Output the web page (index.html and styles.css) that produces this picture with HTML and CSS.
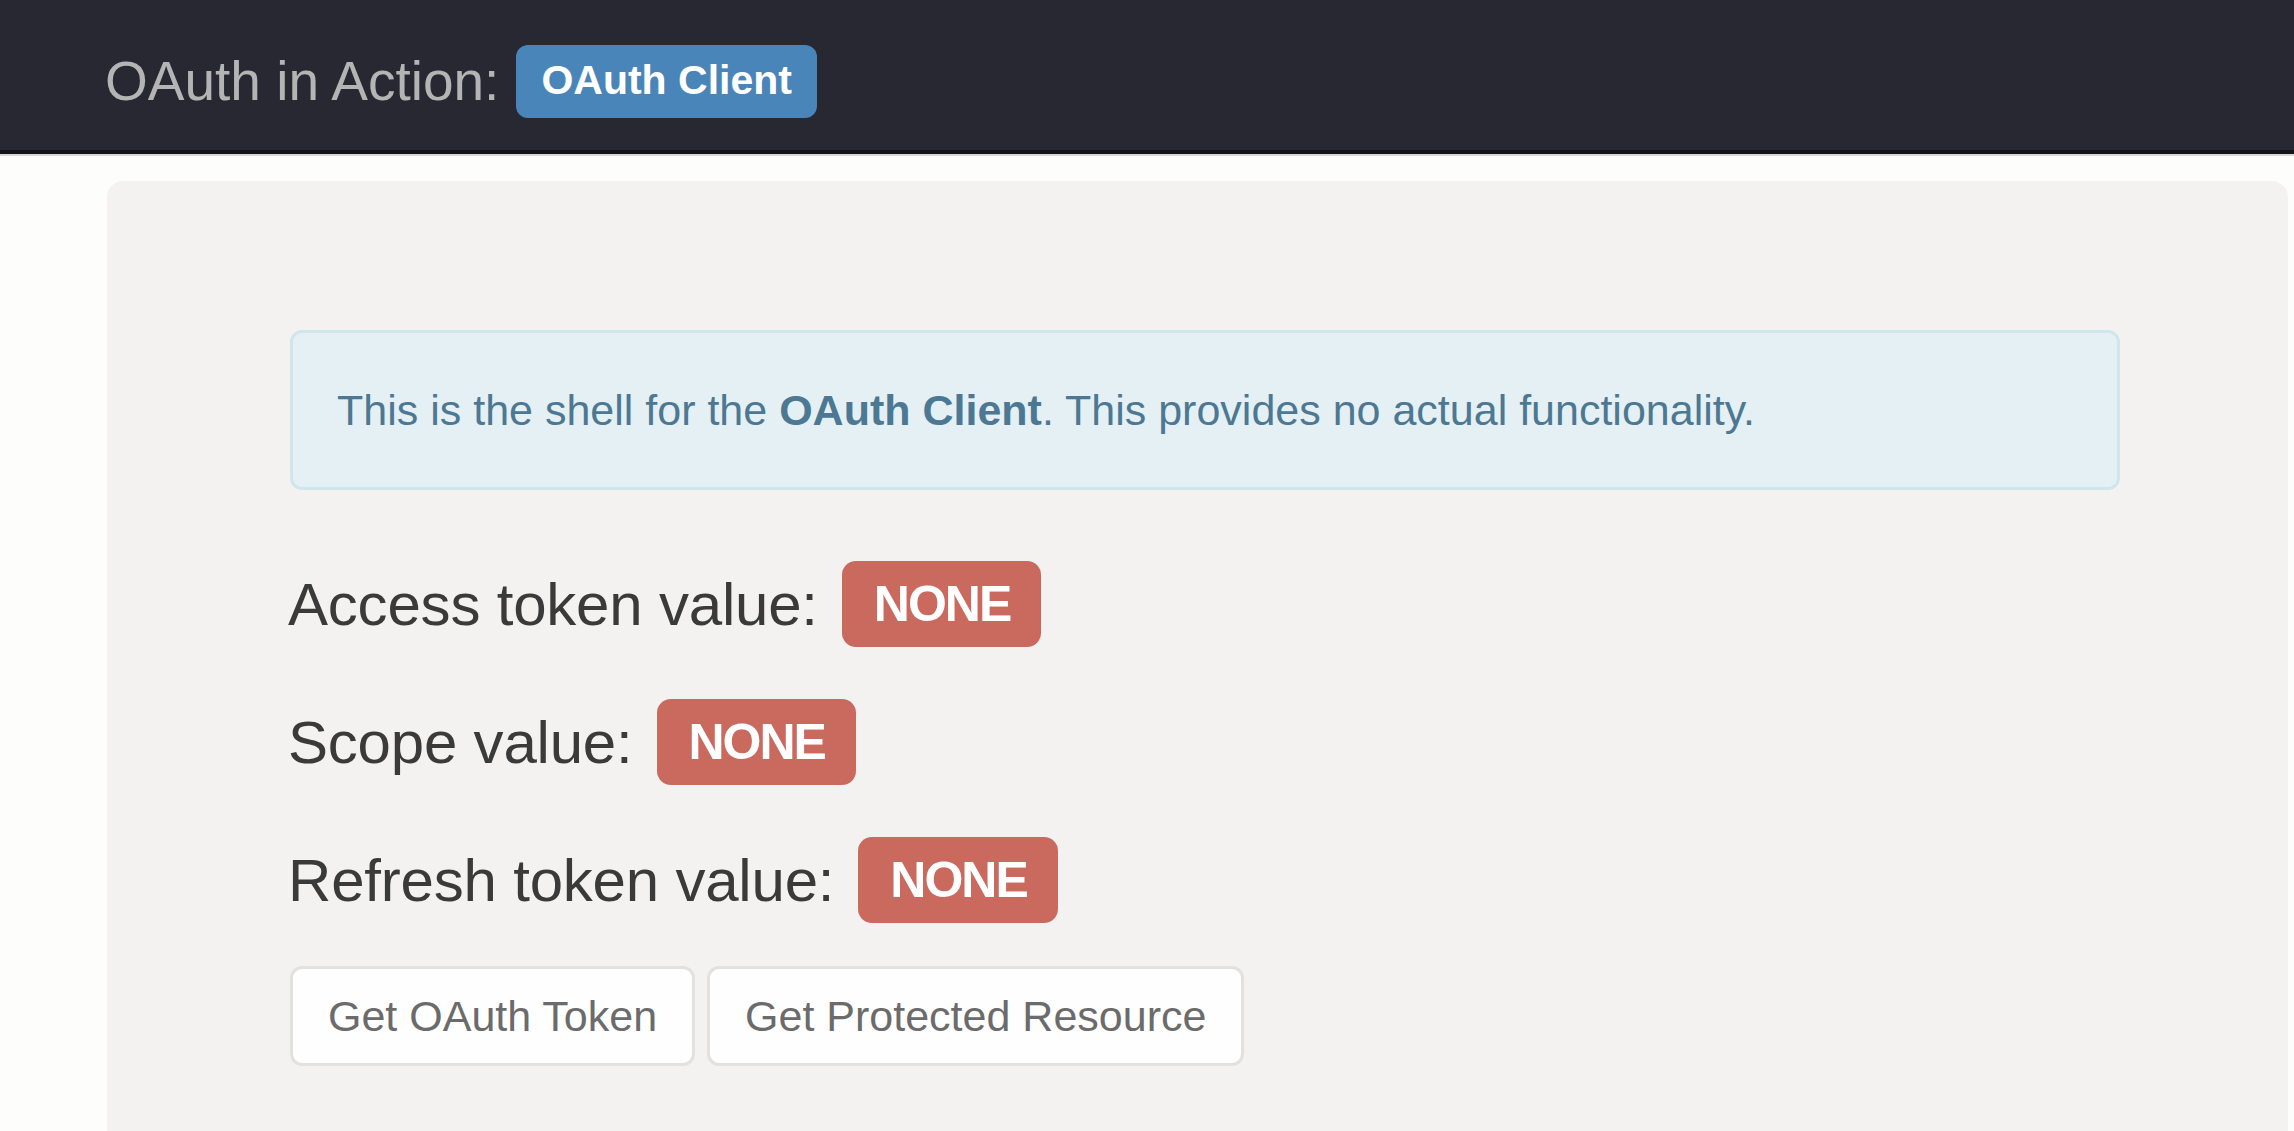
FILE: index.html
```html
<!DOCTYPE html>
<html>
<head>
<meta charset="utf-8">
<title>OAuth in Action: OAuth Client</title>
<link rel="stylesheet" href="styles.css">
</head>
<body>
<nav class="navbar">
  <span class="brand">OAuth in Action:</span>
  <span class="badge">OAuth Client</span>
</nav>
<main class="jumbotron">
  <div class="alert">This is the shell for the <strong>OAuth Client</strong>. This provides no actual functionality.</div>
  <div class="row"><span class="row-text">Access token value:</span><span class="none">NONE</span></div>
  <div class="row"><span class="row-text">Scope value:</span><span class="none">NONE</span></div>
  <div class="row row-last"><span class="row-text">Refresh token value:</span><span class="none">NONE</span></div>
  <div class="buttons">
    <button class="btn">Get OAuth Token</button>
    <button class="btn">Get Protected Resource</button>
  </div>
</main>
</body>
</html>
```
FILE: styles.css
```css
html, body {
  margin: 0;
  padding: 0;
}
body {
  background: #fdfdfc;
  font-family: "Liberation Sans", Arial, Helvetica, sans-serif;
  overflow: hidden;
}
.navbar {
  height: 138px;
  padding-top: 12px;
  background: #282833;
  border-bottom: 4px solid #141419;
  box-shadow: 0 2px 0 #d8d8d4;
  display: flex;
  align-items: center;
  padding-left: 105px;
}
.brand {
  font-size: 55px;
  color: #b4b4b4;
}
.badge {
  margin-left: 17px;
  background: #4a85b9;
  color: #fff;
  font-weight: bold;
  font-size: 41px;
  line-height: 41px;
  padding: 15px 25px 17px;
  border-radius: 12px;
}
.jumbotron {
  margin: 27px 0 0 107px;
  width: 2181px;
  height: 1000px;
  box-sizing: border-box;
  background: #f3f2f1;
  border-radius: 16px 16px 0 0;
  padding: 149px 168px 0 183px;
}
.alert {
  background: #e5f0f4;
  border: 3px solid #d0e6ed;
  border-radius: 12px;
  color: #4c7893;
  font-size: 43px;
  line-height: 60px;
  padding: 47px 44px;
  margin-bottom: 71px;
}
.alert strong {
  font-weight: bold;
}
.row {
  display: flex;
  align-items: center;
  gap: 24px;
  height: 86px;
  margin-bottom: 52px;
}
.row-last {
  margin-bottom: 43px;
}
.row-text {
  font-size: 60px;
  color: #3a3a3a;
  letter-spacing: -0.2px;
  margin-left: -2px;
}
.none {
  background: #ca695e;
  color: #fff;
  font-weight: bold;
  font-size: 50px;
  line-height: 50px;
  padding: 18px 31px 18px 32px;
  border-radius: 14px;
  letter-spacing: -2px;
}
.buttons {
  display: flex;
  gap: 12px;
}
.btn {
  font-family: "Liberation Sans", Arial, Helvetica, sans-serif;
  font-size: 43px;
  line-height: 60px;
  height: 100px;
  padding: 17px 35px;
  background: #fefefe;
  color: #6b6b6b;
  border: 3px solid #e2e1df;
  border-radius: 12px;
}
```
